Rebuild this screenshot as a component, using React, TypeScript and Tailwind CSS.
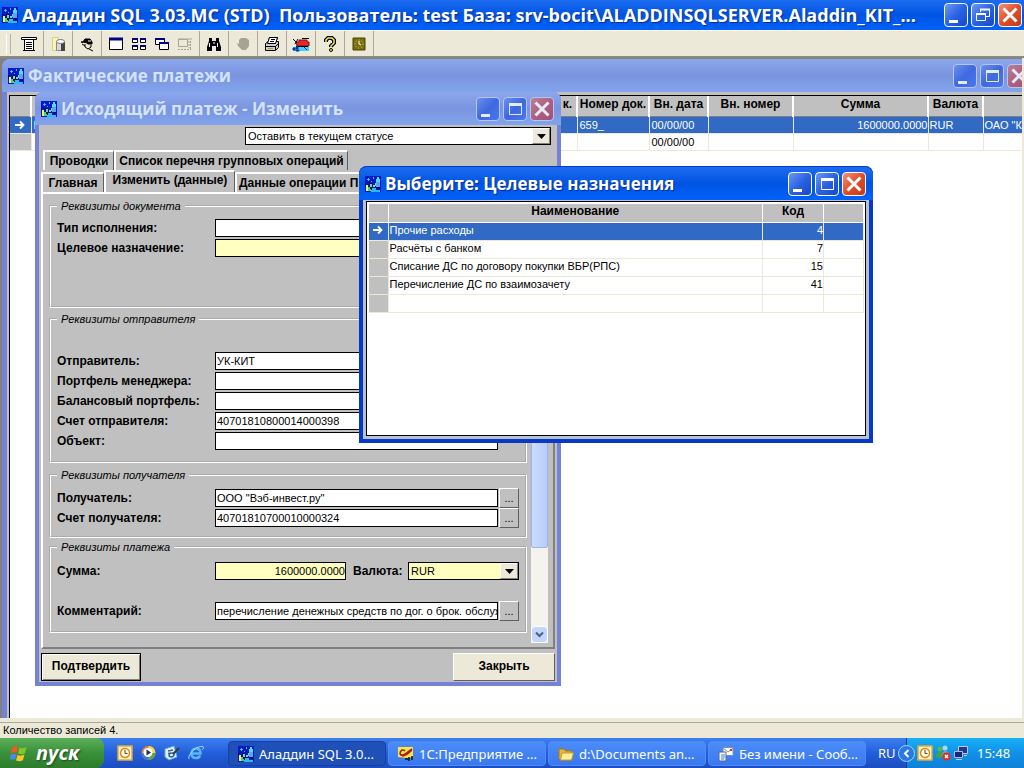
import React from 'react';
import clsx from 'clsx';

interface PaymentRow {
  mark: string;
  start: string;
  docNumber: string;
  date: string;
  innerNumber: string;
  amount: string;
  currency: string;
  client: string;
}

interface Purpose {
  name: string;
  code: string;
}

const payments: PaymentRow[] = [
  {
    mark: 'arrow',
    start: 'И',
    docNumber: '659_',
    date: '00/00/00',
    innerNumber: '',
    amount: '1600000.0000',
    currency: 'RUR',
    client: 'ОАО "К',
  },
  { mark: '', start: '', docNumber: '', date: '00/00/00', innerNumber: '', amount: '', currency: '', client: '' },
];

const purposes: Purpose[] = [
  { name: 'Прочие расходы', code: '4' },
  { name: 'Расчёты с банком', code: '7' },
  { name: 'Списание ДС по договору покупки ВБР(РПС)', code: '15' },
  { name: 'Перечисление ДС по взаимозачету', code: '41' },
  { name: '', code: '' },
];

const AppIcon = () => (
  <svg width="16" height="16" viewBox="0 0 16 16" shapeRendering="crispEdges" className="shrink-0">
    <rect width="16" height="16" fill="#0818c8" />
    <path d="M2 3h3v1H2zM3 2h1v3H3zM8 1h1v2H8zM6 5h1v1H6z" fill="#38c8ff" />
    <path d="M12 1h2v2h1v3h-4V3h1z" fill="#48e0f0" />
    <path d="M11 6h4v5h-4z" fill="#58a8e8" />
    <path d="M4 7h3v1h1v2h2v4H3v-3h1z" fill="#101838" />
    <path d="M5 8h2v3H5zM8 9h2v2H8zM10 7h1v3h-1z" fill="#78c8e8" />
    <path d="M1 9h2v3h1v3H1z" fill="#f0f070" />
    <path d="M3 11h2v2h1v2H3z" fill="#40d870" />
    <path d="M7 12h4v2h4v2H6v-2h1z" fill="#30b8f0" />
    <path d="M12 11h3v2h-3zM0 7h1v3H0z" fill="#081058" />
  </svg>
);

const RowArrow = () => (
  <svg width="10" height="14" viewBox="0 0 10 14" className="mx-auto block">
    <path d="M0 7h8M5 3.500l3.500 3.500L5 10.500" fill="none" stroke="#fff" strokeWidth="1.8" />
  </svg>
);

const WindowButton = ({ kind, active }: { kind: 'min' | 'max' | 'restore' | 'close'; active: boolean }) => {
  const labels = { min: 'Свернуть', max: 'Развернуть', restore: 'Восстановить', close: 'Закрыть окно' };
  return (
    <button
      aria-label={labels[kind]}
      className={clsx(
        'size-6 shrink-0 rounded-sm border',
        active ? 'border-white' : 'border-[#b4c6f2]',
        kind === 'close'
          ? active
            ? 'bg-linear-to-br from-[#f09078] via-[#e04e28] to-[#c03a14]'
            : 'bg-linear-to-br from-[#b88098] via-[#b0607c] to-[#a05078]'
          : active
            ? 'bg-linear-to-br from-[#6c98f4] via-[#2a62e4] to-[#1848c8]'
            : 'bg-linear-to-br from-[#6a90ec] via-[#4068e0] to-[#4878f0]'
      )}
    >
      <svg width="22" height="22" viewBox="0 0 22 22" fill="none" stroke={active ? '#fff' : '#e4ecfc'}>
        {kind === 'min' && <path d="M4 17.500h9" strokeWidth="3" />}
        {kind === 'max' && (
          <>
            <path d="M5.500 5.500h12v11h-12z" />
            <path d="M5 6.500h13" strokeWidth="3" />
          </>
        )}
        {kind === 'restore' && (
          <>
            <path d="M8.5 8V5.5h9v7H14" />
            <path d="M8 5.5h10" strokeWidth="2" />
            <path d="M4.5 9.5h9v7h-9z" />
            <path d="M4 10h10" strokeWidth="2" />
          </>
        )}
        {kind === 'close' && <path d="M4.500 4.500l13 13M17.500 4.500l-13 13" strokeWidth="3" />}
      </svg>
    </button>
  );
};

interface TitleBarProps {
  title: string;
  active?: boolean;
  middle?: 'max' | 'restore';
  textSize?: string;
  className?: string;
}

const TitleBar: React.FC<TitleBarProps> = ({
  title,
  active = false,
  middle = 'max',
  textSize = 'text-[17px]',
  className,
}) => (
  <div
    className={clsx(
      'flex shrink-0 items-center',
      active
        ? 'bg-linear-to-b from-[#1c6cf0] via-[#0054e3] to-[#0062fa]'
        : 'bg-linear-to-b from-[#8ca8ec] via-[#7a94e0] to-[#82a4ec]',
      className
    )}
  >
    <AppIcon />
    <h2
      className={clsx(
        "ml-1 min-w-0 flex-1 truncate whitespace-pre font-['Open_Sans',sans-serif] leading-7 font-bold",
        textSize,
        active ? 'text-white [text-shadow:1px_1px_1px_#0a2a90]' : 'text-[#d4e2fa]'
      )}
    >
      {title}
    </h2>
    <div className="flex gap-[3px]">
      <WindowButton kind="min" active={active} />
      <WindowButton kind={middle} active={active} />
      <WindowButton kind="close" active={active} />
    </div>
  </div>
);

/* Toolbar */

const ToolButton = ({ label, children }: { label: string; children: React.ReactNode }) => (
  <button aria-label={label} className="flex h-6 w-[23px] shrink-0 items-center justify-center">
    <svg width="18" height="16" viewBox="0 0 18 16" fill="none" stroke="#000">
      {children}
    </svg>
  </button>
);

const ToolSeparator = () => (
  <div className="flex w-[6px] shrink-0 justify-center self-stretch">
    <div className="w-px bg-[#aca899]" />
  </div>
);

const Toolbar = () => (
  <div className="flex h-7 shrink-0 items-center border-t border-b-2 border-t-white border-b-[#8c8a80] bg-[#ece9d8]">
    <div className="mr-[6px] ml-[6px] h-5 w-[5px] border-x border-[#b8b4a4] border-l-white" />
    <ToolButton label="Список">
      <path d="M1.500 1.500h15v2h-15z" fill="#fff" />
      <path d="M4.5 3.5h9v11h-9z" fill="#fff" />
      <path d="M6 6.5h6M6 8.5h6M6 10.5h6M6 12.5h6M3 14.500h12" />
    </ToolButton>
    <ToolSeparator />
    <ToolButton label="База данных">
      <path d="M3.500 1.500h6v13h-6z" fill="#f8f4b8" stroke="#d8d090" />
      <path d="M7.500 5.500h8v9h-8z" fill="#d8d8d8" stroke="#888" />
      <path d="M12 6h4v9h-4z" fill="#444" stroke="none" />
      <ellipse cx="11.500" cy="5.500" rx="4" ry="2" fill="#fff" stroke="#777" />
    </ToolButton>
    <ToolSeparator />
    <ToolButton label="Пользователь">
      <path d="M3 6h2l2-3h5l2 3v2h-4L8 6.500z" fill="#000" />
      <path d="M7 8v3l3 2 3-2V9M11 13l4 2M4 8l3 2" />
      <path d="M10 5h3" stroke="#fff" />
    </ToolButton>
    <ToolSeparator />
    <ToolButton label="Окно">
      <path d="M2.5 2.5h13v11h-13z" fill="#fff" />
      <path d="M2 3h14" stroke="#000080" strokeWidth="3" />
    </ToolButton>
    <ToolButton label="Мозаика">
      <path d="M2.500 2.500h5v4h-5zM10.500 2.500h5v4h-5zM2.500 9.500h5v4h-5zM10.500 9.500h5v4h-5z" fill="#fff" />
      <path d="M2 3h6M10 3h6M2 10h6M10 10h6" stroke="#000080" strokeWidth="2" />
    </ToolButton>
    <ToolButton label="Каскад">
      <path d="M2.5 2.5h9v6h-9z" fill="#fff" />
      <path d="M2 3h10" stroke="#000080" strokeWidth="2" />
      <path d="M6.5 6.5h9v7h-9z" fill="#fff" />
      <path d="M6 7h10" stroke="#000080" strokeWidth="2" />
    </ToolButton>
    <ToolButton label="Закрыть все">
      <path d="M2.5 3.5h9v7h-9zM2 3h14" stroke="#a8a494" />
      <path d="M14.5 5v8M2 13.5h13M13 5v7" stroke="#a8a494" strokeDasharray="2 1" />
    </ToolButton>
    <ToolSeparator />
    <ToolButton label="Поиск">
      <path d="M4 2h3v3h4V2h3v3l2 6v4h-5v-5H7v5H2v-4l2-6z" fill="#000" stroke="none" />
      <path d="M4.500 7v4M12.500 7v4M9 6v2" stroke="#fff" />
    </ToolButton>
    <ToolSeparator />
    <ToolButton label="Стоп">
      <path d="M3 7l2 1V4l2-2h5l3 2v6l-3 4H8l-4-4z" fill="#a8a494" stroke="none" />
    </ToolButton>
    <ToolSeparator />
    <ToolButton label="Печать">
      <path d="M6.500 1.500h8l-2 6h-8z" fill="#fff" />
      <path d="M2.500 7.500l3-2h10v6l-3 3h-10z" fill="#ccc" />
      <path d="M6.500 1.500h8l-2 6h-8z" fill="#fff" />
      <path d="M2 10.500h10.500l3-3M12.500 10v4M8 3.500h4M7 5.500h4" />
      <path d="M5 12.500h5" stroke="#c0a000" />
    </ToolButton>
    <ToolSeparator />
    <ToolButton label="Транспорт">
      <path d="M1 11h16v4H1z" fill="#40d0f8" stroke="none" />
      <path d="M4 6h3V4h8v2h2v4H5z" fill="#e82828" stroke="#801010" />
      <path d="M1 3l4 4M6 3l-3 5M10 2.500h7M4 10.500h12" />
      <path d="M1 12h2v2H1zM4 11h2v2H4zM4 14h3v1H4zM12 11l3 3" fill="#0838b0" stroke="#0838b0" />
    </ToolButton>
    <ToolSeparator />
    <ToolButton label="Справка">
      <path d="M5 6V4l2-2h4l2 2v3l-3 3v1" strokeWidth="4" />
      <path d="M5 6V4l2-2h4l2 2v3l-3 3v1" stroke="#f4f040" strokeWidth="1.500" />
      <circle cx="10" cy="14" r="1.500" fill="#f4f040" />
    </ToolButton>
    <ToolSeparator />
    <ToolButton label="Часы">
      <path d="M3 2h12v12H3z" fill="#787010" stroke="#484000" />
      <circle cx="9" cy="8" r="4" stroke="#d8d060" strokeDasharray="1 2" />
      <path d="M9 5v3l2 1" stroke="#fff" />
    </ToolButton>
    <ToolSeparator />
  </div>
);

/* Payments list */

const PaymentsWindow = () => (
  <section className="absolute top-px left-[2px] flex h-[calc(100%+14px)] w-[calc(100%+14px)] flex-col rounded-t-lg border-l-[5px] border-[#7482d8] bg-[#c0c0c0]">
    <TitleBar title="Фактические платежи" className="-ml-[5px] h-[33px] rounded-t-lg pr-[7px] pl-[6px]" />
    <div className="mt-[3px] ml-[2px] flex-1 border-t border-l border-black bg-white">
      <table className="w-[1100px] table-fixed border-collapse">
        <colgroup>
          <col className="w-[21px]" />
          <col className="w-[546px]" />
          <col className="w-[72px]" />
          <col className="w-[59px]" />
          <col className="w-[85px]" />
          <col className="w-[135px]" />
          <col className="w-[55px]" />
          <col />
        </colgroup>
        <thead>
          <tr className="h-5 border-b border-[#808080] bg-[#c0c0c0] text-[12px] leading-4 *:border-r-2 *:border-white *:p-0 *:align-top">
            <th />
            <th className="pr-1! text-right">к.</th>
            <th>Номер док.</th>
            <th>Вн. дата</th>
            <th>Вн. номер</th>
            <th>Сумма</th>
            <th>Валюта</th>
            <th />
          </tr>
        </thead>
        <tbody className="leading-4">
          {payments.map((row, i) => (
            <tr
              key={i}
              className={clsx(
                'h-[17px] *:overflow-hidden *:border-r *:border-b *:border-[#ece9d8] *:p-0 *:whitespace-nowrap',
                row.mark && 'bg-[#316ac5] text-white'
              )}
            >
              <td className={clsx(!row.mark && 'bg-[#c0c0c0]')}>{row.mark && <RowArrow />}</td>
              <td className="pl-[2px]!">{row.start}</td>
              <td className="pl-[2px]!">{row.docNumber}</td>
              <td className="pl-[2px]!">{row.date}</td>
              <td>{row.innerNumber}</td>
              <td className="text-right">{row.amount}</td>
              <td className="pl-px!">{row.currency}</td>
              <td className="pl-px!">{row.client}</td>
            </tr>
          ))}
        </tbody>
      </table>
    </div>
  </section>
);

/* Payment form */

const LookupButton = ({ label }: { label: string }) => (
  <button
    type="button"
    aria-label={label}
    className="ml-px h-5 w-5 shrink-0 border border-t-white border-r-[#606060] border-b-[#606060] border-l-white bg-[#c0c0c0] leading-3"
  >
    ...
  </button>
);

interface FieldProps {
  id: string;
  label: string;
  value?: string;
  yellow?: boolean;
  lookup?: boolean;
}

const Field: React.FC<FieldProps> = ({ id, label, value = '', yellow, lookup = true }) => (
  <div className="flex h-5 items-center">
    <label htmlFor={id} className="w-[158px] shrink-0 text-[12px] font-bold">
      {label}
    </label>
    <input
      id={id}
      type="text"
      defaultValue={value}
      className={clsx('h-[18px] min-w-0 flex-1 border border-black pl-px', yellow ? 'bg-[#ffffc0]' : 'bg-white')}
    />
    {lookup ? <LookupButton label={`Выбрать: ${label}`} /> : <span className="w-[21px] shrink-0" />}
  </div>
);

const Group = ({ title, className, children }: { title: string; className: string; children: React.ReactNode }) => (
  <fieldset className={clsx('border-2 border-white px-[6px] [border-style:groove]', className)}>
    <legend className="px-1 leading-[14px] italic">{title}</legend>
    {children}
  </fieldset>
);

const DropArrow = () => (
  <span className="pointer-events-none absolute inset-y-px right-px flex w-[18px] items-center justify-center border border-t-white border-r-[#808080] border-b-[#808080] border-l-white bg-[#ece9d8]">
    <svg width="9" height="5" viewBox="0 0 9 5">
      <path d="M0 0h9L4.500 5z" />
    </svg>
  </span>
);

const tabClass =
  'border-t-2 border-l-2 border-r border-t-white border-l-white border-r-[#606060] text-[12px] font-bold whitespace-nowrap';

const PaymentForm = () => (
  <section className="absolute top-[34px] left-[35px] w-[526px] rounded-t-lg border-x-4 border-b-4 border-[#7482d8] bg-[#c0c0c0]">
    <TitleBar title="Исходящий платеж - Изменить" className="-mx-1 h-[33px] rounded-t-lg pt-px pr-[7px] pl-[6px]" />
    <form className="px-[2px] pt-[2px]" onSubmit={(e) => e.preventDefault()}>
      <div className="relative mr-1 ml-auto w-[306px]">
        <select
          aria-label="Статус"
          className="block h-[18px] w-full appearance-none border border-black bg-white pl-[2px]"
        >
          <option>Оставить в текущем статусе</option>
        </select>
        <DropArrow />
      </div>

      <div role="tablist" className="mt-[5px]">
        <div className="flex h-5 pl-[2px]">
          <button type="button" role="tab" className={clsx(tabClass, 'w-[71px]')}>
            Проводки
          </button>
          <button type="button" role="tab" className={clsx(tabClass, 'w-[234px]')}>
            Список перечня групповых операций
          </button>
        </div>
        <div className="flex h-[22px] items-end">
          <button type="button" role="tab" className={clsx(tabClass, 'h-5 w-[63px]')}>
            Главная
          </button>
          <button type="button" role="tab" aria-selected className={clsx(tabClass, 'h-[22px] w-[131px] pb-1')}>
            Изменить (данные)
          </button>
          <button type="button" role="tab" className={clsx(tabClass, 'h-5 flex-1 pl-[2px] text-left')}>
            Данные операции П
          </button>
        </div>
      </div>

      <div className="flex gap-1 border-2 border-t-white border-r-[#808080] border-b-[#808080] border-l-white py-1 pr-[5px] pl-[6px]">
        <div className="min-w-0 flex-1 pt-px pb-[10px]">
          <Group title="Реквизиты документа" className="pt-[5px] pb-12">
            <Field id="exec-type" label="Тип исполнения:" />
            <Field id="purpose" label="Целевое назначение:" yellow />
          </Group>
          <Group title="Реквизиты отправителя" className="mt-1 pt-[25px] pb-[10px]">
            <Field id="sender" label="Отправитель:" value="УК-КИТ" />
            <Field id="manager" label="Портфель менеджера:" />
            <Field id="balance" label="Балансовый портфель:" />
            <Field id="sender-account" label="Счет отправителя:" value="40701810800014000398" />
            <Field id="object" label="Объект:" lookup={false} />
          </Group>
          <Group title="Реквизиты получателя" className="mt-[5px] pt-[6px] pb-2">
            <Field id="receiver" label="Получатель:" value={'ООО "Вэб-инвест.ру"'} />
            <Field id="receiver-account" label="Счет получателя:" value="40701810700010000324" />
          </Group>
          <Group title="Реквизиты платежа" className="mt-[2px] pt-[7px] pb-[10px]">
            <div className="flex h-5 items-center">
              <label htmlFor="amount" className="w-[158px] shrink-0 text-[12px] font-bold">
                Сумма:
              </label>
              <input
                id="amount"
                type="text"
                defaultValue="1600000.0000"
                className="h-[18px] w-[131px] border border-black bg-[#ffffc0] text-right"
              />
              <label htmlFor="currency" className="ml-[7px] w-[55px] shrink-0 text-[12px] font-bold">
                Валюта:
              </label>
              <div className="relative flex-1">
                <select
                  id="currency"
                  className="block h-[18px] w-full appearance-none border border-black bg-[#ffffc0] pl-[2px]"
                >
                  <option>RUR</option>
                </select>
                <DropArrow />
              </div>
            </div>
            <div className="mt-5">
              <Field
                id="comment"
                label="Комментарий:"
                value="перечисление денежных средств по дог. о брок. обслуживании"
              />
            </div>
          </Group>
        </div>

        <div className="flex w-[17px] shrink-0 flex-col bg-[#f4f3ee]">
          <button type="button" aria-label="Вверх" className="h-[17px] rounded-sm border border-white bg-[#c4d4fc]" />
          <div className="flex-1">
            <div className="h-[81%] rounded-xs border border-[#98b4f0] bg-linear-to-r from-[#ccdcff] to-[#b8ccfa]" />
          </div>
          <button
            type="button"
            aria-label="Вниз"
            className="flex h-[17px] items-center justify-center rounded-sm border border-white bg-[#c4d4fc]"
          >
            <svg width="9" height="7" viewBox="0 0 9 7">
              <path d="M1 1.500l3.500 3.500L8 1.500" fill="none" stroke="#4d6185" strokeWidth="2" />
            </svg>
          </button>
        </div>
      </div>

      <div className="flex justify-between pt-1 pb-px text-[12px] font-bold">
        <button
          type="submit"
          className="h-7 w-[100px] border border-black bg-[#ece9d8] pb-[2px] shadow-[inset_1px_1px_0_#fff,inset_-1px_-1px_0_#808080]"
        >
          Подтвердить
        </button>
        <button
          type="button"
          className="h-7 w-[102px] border border-t-white border-r-[#606060] border-b-[#606060] border-l-white bg-[#ece9d8] pb-[2px]"
        >
          Закрыть
        </button>
      </div>
    </form>
  </section>
);

/* Purpose picker */

const PurposeDialog = () => (
  <section className="absolute top-[108px] left-[359px] flex h-[277px] w-[514px] flex-col rounded-t-lg border-x-4 border-b-4 border-[#0838c8] bg-[#b8c0d4]">
    <TitleBar
      title="Выберите: Целевые назначения"
      active
      className="-mx-1 h-[34px] rounded-t-lg border-t border-[#0838c8] pr-[7px] pl-[6px]"
    />
    <div className="mx-[3px] mt-px mb-[3px] flex-1 border border-black bg-white p-[2px] pr-px">
      <table className="w-full table-fixed border-collapse">
        <colgroup>
          <col className="w-[19px]" />
          <col />
          <col className="w-[61px]" />
          <col className="w-[40px]" />
        </colgroup>
        <thead>
          <tr className="h-[18px] bg-[#c0c0c0] text-[12px] *:border-r *:border-b *:border-white *:p-0 *:align-top">
            <th />
            <th>Наименование</th>
            <th>Код</th>
            <th />
          </tr>
        </thead>
        <tbody>
          {purposes.map((item, i) => (
            <tr
              key={i}
              className={clsx(
                'h-[18px] *:border-r *:border-b *:border-[#ece9d8] *:p-0 *:align-top',
                i === 0 && 'bg-[#316ac5] text-white'
              )}
            >
              <td className={clsx(i > 0 && 'bg-[#c0c0c0]')}>{i === 0 && <RowArrow />}</td>
              <td className="pl-px!">{item.name}</td>
              <td className="text-right">{item.code}</td>
              <td />
            </tr>
          ))}
        </tbody>
      </table>
    </div>
  </section>
);

/* Taskbar */

const ClockIcon = () => (
  <svg width="16" height="16" viewBox="0 0 16 16" className="shrink-0">
    <path d="M1 1h14v14H1z" fill="#fff4d0" stroke="#e8a830" strokeWidth="1.5" />
    <circle cx="8" cy="8" r="4.500" fill="#fffbe8" stroke="#d88818" strokeWidth="1.5" />
    <path d="M8 5v3.500h2.500" fill="none" stroke="#604010" />
  </svg>
);

const OneCIcon = () => (
  <svg width="16" height="16" viewBox="0 0 16 16" className="shrink-0">
    <path d="M0 1h15v10l-6 1-9-1z" fill="#f8e840" />
    <path d="M2 8c0-4 3-5 5-3M2 8c2 3 5 0 12-5M4 10c3 0 6-2 10-6" fill="none" stroke="#b01818" strokeWidth="1.6" />
    <path d="M7 13h3M11 11v4M14 10v4" stroke="#101010" strokeWidth="1.5" />
  </svg>
);

const FolderIcon = () => (
  <svg width="16" height="16" viewBox="0 0 16 16" className="shrink-0">
    <path d="M1 3h5l1.500 2H14v9H2L1 13z" fill="#e8b830" stroke="#a87810" />
    <path d="M4 7h11.500l-2 7H2.500z" fill="#fff0a0" stroke="#c89828" />
  </svg>
);

const MailIcon = () => (
  <svg width="16" height="16" viewBox="0 0 16 16" className="shrink-0">
    <path d="M5 1.500h10v8H5z" fill="#fff" stroke="#8090b0" />
    <path d="M5 2l5 4 5-4" fill="none" stroke="#8090b0" />
    <path d="M12 3h2v2h-2z" fill="#d83020" />
    <path d="M1 6h7v9H1z" fill="#f4f8ff" stroke="#506890" />
    <path d="M3 9h4M3 11h4M3 13h3" stroke="#5080c0" />
  </svg>
);

const tasks = [
  { title: 'Аладдин SQL 3.0...', icon: <AppIcon />, pressed: true },
  { title: '1С:Предприятие ...', icon: <OneCIcon />, pressed: false },
  { title: 'd:\\Documents an...', icon: <FolderIcon />, pressed: false },
  { title: 'Без имени - Сооб...', icon: <MailIcon />, pressed: false },
];

const Taskbar = () => (
  <footer className="flex h-[30px] shrink-0 items-stretch bg-linear-to-b from-[#3c80f0] via-[#245edb] to-[#1c4cc0] font-['Noto_Sans',sans-serif] text-[13px] text-white">
    <button className="flex w-[104px] shrink-0 items-center gap-2 rounded-r-lg bg-linear-to-b from-[#5cb05c] via-[#3a9038] to-[#2c7c2c] pl-[10px] font-['Open_Sans',sans-serif] text-[20px] leading-6 font-bold italic [text-shadow:1px_1px_2px_#1a4a1a]">
      <svg width="18" height="17" viewBox="0 0 18 17">
        <path d="M2 3c2-2 4-2 6-1L6.500 8c-2-1-4-1-6 .5z" fill="#f05828" />
        <path d="M9.500 2.500c2 1 4 1 7-.5L15 8c-2 1.500-4 1.500-7 .5z" fill="#80c828" />
        <path d="M.5 10c2-2 4-1.500 6-.5L5 15c-2-1-4-1-5.500 0z" fill="#4888f0" />
        <path d="M7.500 10c2 1 4 1 7-.5L13 15c-2 1.500-4 1.500-7 .5z" fill="#f8c828" />
      </svg>
      пуск
    </button>
    <div className="flex w-[124px] shrink-0 items-center gap-2 pl-[13px]">
      <button aria-label="Календарь">
        <ClockIcon />
      </button>
      <button aria-label="Проигрыватель">
        <svg width="15" height="16" viewBox="0 0 15 16">
          <circle cx="7.500" cy="8" r="7" fill="#f08828" />
          <path d="M7.500 1a7 7 0 0 1 7 7h-7z" fill="#f8d848" />
          <path d="M7.500 15a7 7 0 0 0 7-7h-7z" fill="#58a848" />
          <path d="M.5 8a7 7 0 0 0 7 7V8z" fill="#3878d8" />
          <circle cx="7" cy="7.500" r="4.500" fill="#fff" />
          <path d="M5.500 4.500L10 7.500l-4.500 3z" fill="#203050" />
        </svg>
      </button>
      <button aria-label="Рабочий стол">
        <svg width="16" height="16" viewBox="0 0 16 16">
          <path d="M1 4l9-3 3 11-8 3-4-3z" fill="#e4f2ff" stroke="#68a8e0" />
          <path d="M4 6l5-1M4 8.500l3-.5M5 11c0-3 4-4 5-2s-3 4-5 2z" fill="none" stroke="#2860a8" strokeWidth="1.5" />
          <path d="M15 3L9 9" stroke="#403830" strokeWidth="2" />
        </svg>
      </button>
      <button aria-label="Интернет">
        <svg width="16" height="16" viewBox="0 0 16 16" fill="none">
          <path
            d="M4 8.500h8.500C12.500 5 10.500 3.500 8 3.500S3.500 5.500 3.500 8.500s2 4.500 4.500 4.500c2 0 3.500-1 4-2.500"
            stroke="#58b8f8"
            strokeWidth="2.5"
          />
          <path d="M1 14C-1 10 9 0 15 1.500c1 .5 0 2.500-.5 3" stroke="#a8dcff" />
        </svg>
      </button>
    </div>
    <nav className="flex min-w-0 flex-1 gap-[2px] pt-[3px] pb-[2px]">
      {tasks.map((task) => (
        <button
          key={task.title}
          className={clsx(
            'flex min-w-0 flex-1 items-center gap-[5px] rounded-sm border pl-[9px] leading-5 whitespace-nowrap',
            task.pressed ? 'border-[#1840a0] bg-[#1e50b8]' : 'border-[#4c8cf8] bg-linear-to-b from-[#4c8cf8] to-[#3a78f0]'
          )}
        >
          {task.icon}
          <span>{task.title}</span>
        </button>
      ))}
    </nav>
    <span className="flex w-10 shrink-0 items-center pl-3">RU</span>
    <div className="relative flex w-[118px] shrink-0 items-center gap-[2px] border-l border-[#0c3c98] bg-linear-to-b from-[#18b0f4] via-[#1090e8] to-[#1080d8] pl-[10px]">
      <button
        aria-label="Скрытые значки"
        className="absolute top-[7px] -left-[9px] flex size-[17px] items-center justify-center rounded-full border border-[#a0d8ff] bg-[#2878e8]"
      >
        <svg width="7" height="9" viewBox="0 0 7 9">
          <path d="M5.500 1L2 4.500 5.500 8" fill="none" stroke="#fff" strokeWidth="2" />
        </svg>
      </button>
      <ClockIcon />
      <svg width="16" height="16" viewBox="0 0 16 16">
        <circle cx="5" cy="4" r="2.500" fill="#58b848" />
        <circle cx="10" cy="3" r="2.500" fill="#a8d8f8" />
        <path d="M1 13c0-8 8-8 8-1z" fill="#48a040" />
        <path d="M7 11c0-7 7-7 7 0z" fill="#60a8e0" />
        <circle cx="11.500" cy="11.500" r="4" fill="#e03020" />
        <path d="M10 10l3 3M13 10l-3 3" stroke="#fff" strokeWidth="1.5" />
      </svg>
      <svg width="16" height="16" viewBox="0 0 16 16">
        <path d="M5.500 1.500h9v7h-9z" fill="#203898" stroke="#c0c8e8" />
        <path d="M1.500 6.500h8v6h-8z" fill="#182878" stroke="#b0b8d8" />
        <path d="M3 14.500h6M11 10.500h3" stroke="#c0c8e8" />
      </svg>
      <time className="ml-[6px]">15:48</time>
    </div>
  </footer>
);

const App: React.FC = () => {
  return (
    <div className="flex h-screen flex-col overflow-hidden bg-white font-['Liberation_Sans',Arial,sans-serif] text-[11px] leading-[14px] text-black [&_input]:leading-4">
      <TitleBar
        title={'Аладдин SQL 3.03.МС (STD)  Пользователь: test База: srv-bocit\\ALADDINSQLSERVER.Aladdin_KIT_...'}
        active
        middle="restore"
        textSize="text-[18px]"
        className="h-[30px] pr-[2px] pl-[2px]"
      />
      <Toolbar />

      <main className="relative min-h-0 flex-1 overflow-hidden border-r-2 border-[#ece9d8] bg-[#808080]">
        <PaymentsWindow />
        <PaymentForm />
        <PurposeDialog />
      </main>

      <div className="shrink-0 border-t-4 border-[#ece9d8] bg-[#ece9d8]">
        <div className="h-4 border-t border-[#aca899] pl-[3px]">Количество записей 4.</div>
      </div>
      <Taskbar />
    </div>
  );
};

export default App;
